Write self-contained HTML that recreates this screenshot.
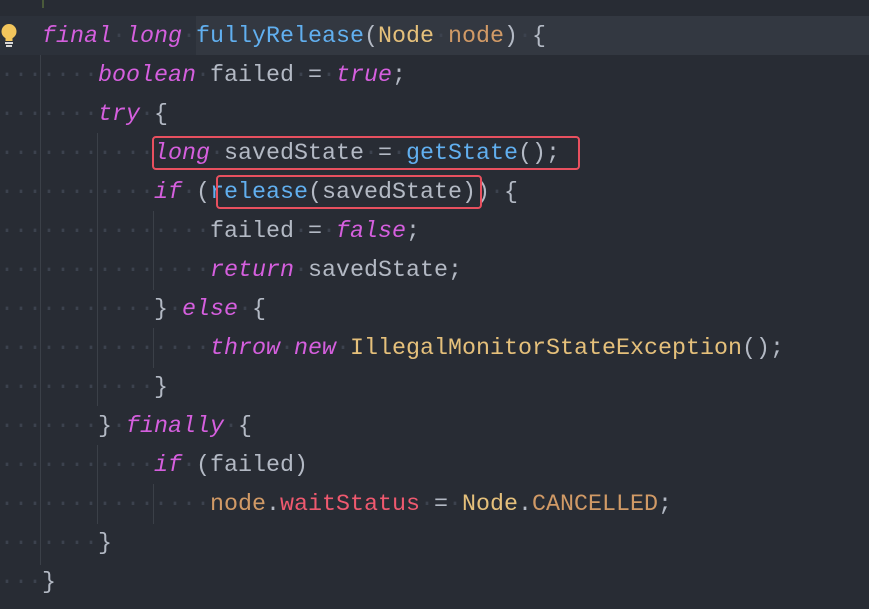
<!DOCTYPE html>
<html><head><meta charset="utf-8"><style>
body{margin:0;width:869px;height:609px;background:#282c34;overflow:hidden;position:relative;font-family:"Liberation Mono",monospace;}
.l{position:absolute;left:0;height:39px;line-height:43px;font-size:23.33px;white-space:pre;color:#b3b9c4;}
.d{color:#3c424e;}
.k{color:#d55fde;font-style:italic;}
.f{color:#61afef;}
.t{color:#e5c07b;}
.r{color:#ef596f;}
.o{color:#d19a66;}
.g{position:absolute;width:1px;background:#3b4048;}
.box{position:absolute;border:2px solid #e8505f;border-radius:4px;}
</style></head><body>
<div style="position:absolute;left:0;top:16px;width:869px;height:39px;background:#2c313a"></div>
<div style="position:absolute;left:196px;top:16px;width:673px;height:39px;background:#333841"></div>
<div style="position:absolute;left:42px;top:0;width:2px;height:8px;background:#4a5a3a"></div>
<div class="g" style="left:40px;top:55px;height:510px"></div>
<div class="g" style="left:97px;top:133px;height:273px"></div>
<div class="g" style="left:97px;top:445px;height:79px"></div>
<div class="g" style="left:153px;top:211px;height:79px"></div>
<div class="g" style="left:153px;top:328px;height:40px"></div>
<div class="g" style="left:153px;top:484px;height:40px"></div>
<svg style="position:absolute;left:0;top:23px" width="18" height="26" viewBox="0 0 18 26"><circle cx="9" cy="8.5" r="7.5" fill="#f2c55c"/><rect x="5.5" y="13" width="7" height="5" fill="#f2c55c"/><rect x="5" y="19" width="8" height="2" fill="#d8d8d8"/><rect x="6" y="22" width="6" height="2" fill="#d8d8d8"/></svg>
<div class="l" style="top:16px"><span class="d">   </span><span class="k">final</span><span class="d">·</span><span class="k">long</span><span class="d">·</span><span class="f">fullyRelease</span>(<span class="t">Node</span><span class="d">·</span><span class="o">node</span>)<span class="d">·</span>{</div>
<div class="l" style="top:55px"><span class="d">·······</span><span class="k">boolean</span><span class="d">·</span>failed<span class="d">·</span>=<span class="d">·</span><span class="k">true</span>;</div>
<div class="l" style="top:94px"><span class="d">·······</span><span class="k">try</span><span class="d">·</span>{</div>
<div class="l" style="top:133px"><span class="d">···········</span><span class="k">long</span><span class="d">·</span>savedState<span class="d">·</span>=<span class="d">·</span><span class="f">getState</span>();</div>
<div class="l" style="top:172px"><span class="d">···········</span><span class="k">if</span><span class="d">·</span>(<span class="f">release</span>(savedState))<span class="d">·</span>{</div>
<div class="l" style="top:211px"><span class="d">···············</span>failed<span class="d">·</span>=<span class="d">·</span><span class="k">false</span>;</div>
<div class="l" style="top:250px"><span class="d">···············</span><span class="k">return</span><span class="d">·</span>savedState;</div>
<div class="l" style="top:289px"><span class="d">···········</span>}<span class="d">·</span><span class="k">else</span><span class="d">·</span>{</div>
<div class="l" style="top:328px"><span class="d">···············</span><span class="k">throw</span><span class="d">·</span><span class="k">new</span><span class="d">·</span><span class="t">IllegalMonitorStateException</span>();</div>
<div class="l" style="top:367px"><span class="d">···········</span>}</div>
<div class="l" style="top:406px"><span class="d">·······</span>}<span class="d">·</span><span class="k">finally</span><span class="d">·</span>{</div>
<div class="l" style="top:445px"><span class="d">···········</span><span class="k">if</span><span class="d">·</span>(failed)</div>
<div class="l" style="top:484px"><span class="d">···············</span><span class="o">node</span>.<span class="r">waitStatus</span><span class="d">·</span>=<span class="d">·</span><span class="t">Node</span>.<span class="o">CANCELLED</span>;</div>
<div class="l" style="top:523px"><span class="d">·······</span>}</div>
<div class="l" style="top:562px"><span class="d">···</span>}</div>
<div class="box" style="left:152px;top:136px;width:424px;height:30px"></div>
<div class="box" style="left:216px;top:175px;width:262px;height:30px"></div>
</body></html>
